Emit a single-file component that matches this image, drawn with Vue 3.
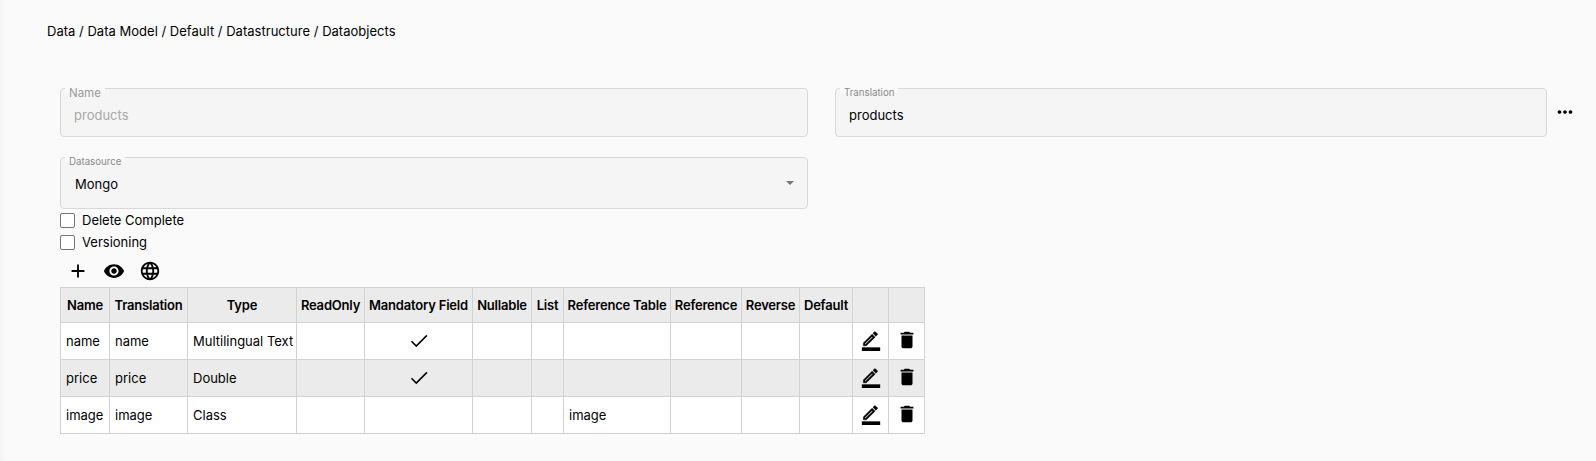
<script setup>
const paths = {
  add: 'M19 13h-6v6h-2v-6H5v-2h6V5h2v6h6v2z',
  eye: 'M12 4.5C7 4.5 2.73 7.61 1 12c1.73 4.39 6 7.5 11 7.5s9.27-3.11 11-7.5c-1.73-4.39-6-7.5-11-7.5zM12 17c-2.76 0-5-2.24-5-5s2.24-5 5-5 5 2.24 5 5-2.24 5-5 5zm0-8c-1.66 0-3 1.34-3 3s1.34 3 3 3 3-1.34 3-3-1.34-3-3-3z',
  globe: 'M11.99 2C6.47 2 2 6.48 2 12s4.47 10 9.99 10C17.52 22 22 17.52 22 12S17.52 2 11.99 2zm6.93 6h-2.95c-.32-1.25-.78-2.45-1.38-3.56 1.84.63 3.37 1.91 4.33 3.56zM12 4.04c.83 1.2 1.48 2.53 1.91 3.96h-3.82c.43-1.43 1.08-2.76 1.91-3.96zM4.26 14C4.1 13.36 4 12.69 4 12s.1-1.36.26-2h3.38c-.08.66-.14 1.32-.14 2 0 .68.06 1.34.14 2H4.26zm.82 2h2.95c.32 1.25.78 2.45 1.38 3.56-1.84-.63-3.37-1.9-4.33-3.56zm2.95-8H5.08c.96-1.66 2.49-2.93 4.33-3.56C8.81 5.55 8.35 6.75 8.03 8zM12 19.96c-.83-1.2-1.48-2.53-1.91-3.96h3.82c-.43 1.43-1.08 2.76-1.91 3.96zM14.34 14H9.66c-.09-.66-.16-1.32-.16-2 0-.68.07-1.35.16-2h4.68c.09.65.16 1.32.16 2 0 .68-.07 1.34-.16 2zm.25 5.56c.6-1.11 1.06-2.31 1.38-3.56h2.95c-.96 1.65-2.49 2.93-4.33 3.56zM16.36 14c.08-.66.14-1.32.14-2 0-.68-.06-1.34-.14-2h3.38c.16.64.26 1.31.26 2s-.1 1.36-.26 2h-3.38z',
  more: 'M6 10c-1.1 0-2 .9-2 2s.9 2 2 2 2-.9 2-2-.9-2-2-2zm12 0c-1.1 0-2 .9-2 2s.9 2 2 2 2-.9 2-2-.9-2-2-2zm-6 0c-1.1 0-2 .9-2 2s.9 2 2 2 2-.9 2-2-.9-2-2-2z',
  bar: 'M2 20h20v4H2v-4z',
  pencil: 'M14.06 7.02l.92.92L5.92 17H5v-.92l9.06-9.06M17.66 1c-.25 0-.51.1-.7.29l-1.83 1.83 3.75 3.75 1.83-1.83c.39-.39.39-1.02 0-1.41l-2.34-2.34c-.2-.2-.45-.29-.71-.29zm-3.6 3.19L3 15.25V19h3.75L17.81 7.94l-3.75-3.75z',
  trash: 'M6 19c0 1.1.9 2 2 2h8c1.1 0 2-.9 2-2V7H6v12zM19 4h-3.5l-1-1h-5l-1 1H5v2h14V4z',
}
const cols = [
  { label: 'Name', w: 49 },
  { label: 'Translation', w: 78 },
  { label: 'Type', w: 109 },
  { label: 'ReadOnly', w: 68 },
  { label: 'Mandatory Field', w: 108 },
  { label: 'Nullable', w: 59 },
  { label: 'List', w: 32 },
  { label: 'Reference Table', w: 107 },
  { label: 'Reference', w: 71 },
  { label: 'Reverse', w: 58 },
  { label: 'Default', w: 53 },
  { label: '', w: 36 },
  { label: '', w: 36 },
]
const rows = [
  { name: 'name', translation: 'name', type: 'Multilingual Text', mandatory: true, ref: '' },
  { name: 'price', translation: 'price', type: 'Double', mandatory: true, ref: '' },
  { name: 'image', translation: 'image', type: 'Class', mandatory: false, ref: 'image' },
]
</script>

<template>
  <div class="page">
    <div class="crumbs">Data / Data Model / Default / Datastructure / Dataobjects</div>
    <div class="form">
      <div class="row-fields">
        <div class="field disabled first">
          <span class="flabel">Name</span>
          <span class="fvalue">products</span>
        </div>
        <div class="field second">
          <span class="flabel small">Translation</span>
          <span class="fvalue">products</span>
        </div>
        <button class="more" type="button" aria-label="More">
          <svg viewBox="0 0 24 24" width="22" height="22"><path :d="paths.more" /></svg>
        </button>
      </div>
      <div class="field select first">
        <span class="flabel small">Datasource</span>
        <span class="fvalue">Mongo</span>
        <span class="arrow"></span>
      </div>
      <label class="check"><span class="box"></span>Delete Complete</label>
      <label class="check"><span class="box"></span>Versioning</label>
      <div class="toolbar">
        <button type="button" aria-label="Add"><svg viewBox="0 0 24 24" width="22" height="22"><path :d="paths.add" /></svg></button>
        <button type="button" aria-label="Show"><svg viewBox="0 0 24 24" width="22" height="22"><path :d="paths.eye" /></svg></button>
        <button type="button" aria-label="Languages"><svg viewBox="0 0 24 24" width="22" height="22"><path :d="paths.globe" /></svg></button>
      </div>
      <table class="grid">
        <colgroup>
          <col v-for="c in cols" :key="c.label + c.w" :style="{ width: c.w + 'px' }" />
        </colgroup>
        <thead>
          <tr><th v-for="(c, i) in cols" :key="i">{{ c.label }}</th></tr>
        </thead>
        <tbody>
          <tr v-for="r in rows" :key="r.name">
            <td>{{ r.name }}</td>
            <td>{{ r.translation }}</td>
            <td>{{ r.type }}</td>
            <td></td>
            <td class="center">
              <svg v-if="r.mandatory" class="tick" viewBox="0 0 24 24" width="22" height="22"><path d="M3.8 12.3 9 17.5 20.6 5.9" /></svg>
            </td>
            <td></td>
            <td></td>
            <td>{{ r.ref }}</td>
            <td></td>
            <td></td>
            <td></td>
            <td class="center">
              <svg class="action" viewBox="0 0 24 24" width="22" height="22">
                <path :d="paths.bar" />
                <path class="pencil" :d="paths.pencil" transform="translate(1.1 2.05) scale(.86)" />
              </svg>
            </td>
            <td class="center"><svg class="action" viewBox="0 0 24 24" width="22" height="22"><path :d="paths.trash" /></svg></td>
          </tr>
        </tbody>
      </table>
    </div>
  </div>
</template>

<style>
html, body { margin: 0; background: #fafafa; }
</style>

<style scoped>
.page {
  height: 461px;
  box-sizing: border-box;
  padding: 23px 0 0 47px;
  font-family: Inter, "Liberation Sans", sans-serif;
  font-size: 13px;
  color: #000;
  background: #fafafa;
  box-shadow: inset 5px 0 5px -3px rgba(0, 0, 0, 0.035);
  overflow: hidden;
}
.crumbs { line-height: 17px; font-size: 13px; letter-spacing: 0.02px; }
.form { margin: 48px 0 0 13px; }
.row-fields { display: flex; align-items: flex-start; margin-bottom: 20px; }
.field {
  position: relative;
  box-sizing: border-box;
  height: 49px;
  border: 1px solid #d8d8d8;
  border-radius: 4px;
  background: #f5f5f5;
  display: flex;
  align-items: center;
  padding: 4px 0 0 13px;
}
.first { width: 748px; flex: none; }
.second { width: 712px; flex: none; margin-left: 27px; }
.select { height: 52px; padding: 1px 0 0 14px; }
.flabel {
  position: absolute;
  left: 4px;
  top: -2px;
  padding: 0 4px;
  font-size: 11.5px;
  line-height: 12px;
  color: #9a9a9a;
  background: linear-gradient(#fafafa 50%, #f5f5f5 50%);
}
.flabel.small { font-size: 9.7px; color: #8a8a8a; }
.fvalue { font-size: 13px; line-height: 18px; }
.disabled .fvalue { color: #a8a8a8; }
.arrow {
  position: absolute;
  right: 13px;
  top: 23px;
  border-left: 4px solid transparent;
  border-right: 4px solid transparent;
  border-top: 4px solid #757575;
}
button {
  border: 0;
  padding: 0;
  background: none;
  display: flex;
  align-items: center;
  justify-content: center;
}
.more { margin: 13px 0 0 7px; width: 22px; height: 22px; }
.check {
  display: flex;
  align-items: center;
  gap: 7px;
  height: 22px;
  font-size: 13px;
}
.box {
  box-sizing: border-box;
  width: 15px;
  height: 15px;
  border: 1px solid #757575;
  border-radius: 2px;
  background: #fff;
}
.toolbar { display: flex; height: 33px; align-items: center; margin-top: 1px; }
.toolbar button { width: 36px; height: 22px; }
.grid {
  table-layout: fixed;
  width: 865px;
  border-collapse: collapse;
  font-size: 13px;
}
.grid th, .grid td {
  border: 1px solid #d2d2d2;
  padding: 0 0 0 5px;
  overflow: hidden;
  white-space: nowrap;
  text-align: left;
}
.grid th {
  height: 34px;
  padding: 0;
  text-align: center;
  font-weight: 600;
  letter-spacing: -0.2px;
  background: #ebebeb;
}
.grid td { height: 36px; background: #fff; }
.grid tbody tr:nth-child(2) td { background: #ebebeb; }
.grid td.center { padding: 0; text-align: center; }
.grid svg { display: block; margin: 0 auto; }
.grid svg.action { margin-bottom: 2px; }
.pencil { stroke: #000; stroke-width: 0.6; }
.tick { fill: none; stroke: #000; stroke-width: 1.7; }
</style>
